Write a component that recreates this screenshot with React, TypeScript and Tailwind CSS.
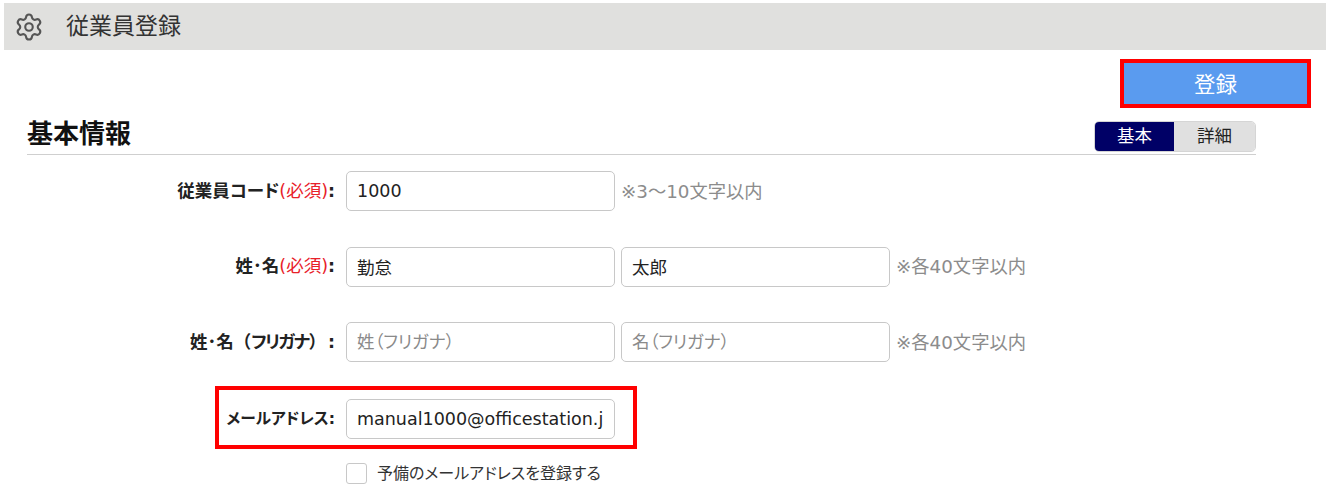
import { Settings } from "lucide-react";

const font = "font-['DejaVu_Sans','Noto_Sans_CJK_JP',sans-serif] [font-feature-settings:'palt']";
const inputClass =
  "h-[40px] w-[269px] rounded-[5px] border border-[#c8c8c8] bg-white px-[10px] text-[17.5px] text-[#222] outline-none placeholder:text-[#8a8a8a]";
const fullWidth = "[font-feature-settings:normal]";

function Required() {
  return <span className="font-normal text-[#e8212a]">(必須)</span>;
}

function Row({ label, children, hint }: { label: React.ReactNode; children: React.ReactNode; hint?: string }) {
  return (
    <div className="flex items-center">
      <div className="w-[308px] text-right text-[17.5px] font-bold whitespace-nowrap text-[#222]">{label}</div>
      <div className="ml-[11px] flex gap-[6px]">{children}</div>
      {hint && <span className={`ml-[6px] pt-[1px] text-[18.3px] text-[#8c8c8c] ${fullWidth}`}>{hint}</span>}
    </div>
  );
}

export default function App() {
  return (
    <div className={`h-[503px] overflow-hidden bg-white pl-[4px] pt-[3px] ${font}`}>
      {/* Title bar */}
      <div className="flex h-[47px] items-center bg-[#e0e0de] pl-[10px]">
        <Settings size={30} strokeWidth={1.7} className="text-[#555]" />
        <h1 className="ml-[22px] text-[23px] text-[#333]">従業員登録</h1>
      </div>

      <div className="flex justify-end pr-[15px] pt-[9px]">
        <button className="h-[49px] w-[191px] border-4 border-[#f00] bg-[#5a9bef] pt-[3px] text-[21.5px] text-white">登録</button>
      </div>

      <div className="ml-[23px] w-[1229px]">
        {/* Section heading */}
        <div className="flex h-[47px] items-end justify-between border-b border-[#cfcfcf] pb-[2px]">
          <h2 className="text-[26px] leading-[36px] font-bold text-[#111]">基本情報</h2>
          <div className="flex h-[31px] w-[162px] overflow-hidden rounded-[5px] border border-[#d5d5d5] text-[17.5px]">
            <div className="flex w-[79px] items-center justify-center bg-[#000066] text-white">基本</div>
            <div className="flex flex-1 items-center justify-center bg-[#e0e0e0] text-[#222]">詳細</div>
          </div>
        </div>

        <div className="mt-[16px] flex flex-col gap-[35.5px]">
          <Row label={<>従業員コード<Required />:</>} hint="※3～10文字以内">
            <input readOnly className={inputClass} defaultValue="1000" />
          </Row>
          <Row label={<>姓･名<Required />:</>} hint="※各40文字以内">
            <input readOnly className={inputClass} defaultValue="勤怠" />
            <input readOnly className={inputClass} defaultValue="太郎" />
          </Row>
          <Row
            label={
              <>
                姓･名<span className={fullWidth}>（</span>
                <span className="tracking-[-1.5px]">フリガナ</span>
                <span className={fullWidth}>）</span>
                <span className="ml-[2px]">:</span>
              </>
            }
            hint="※各40文字以内"
          >
            <input readOnly className={inputClass} placeholder="姓（フリガナ）" />
            <input readOnly className={inputClass} placeholder="名（フリガナ）" />
          </Row>
        </div>

        {/* Email row, highlighted */}
        <div className="ml-[188px] mt-[24px] flex h-[63px] w-[422px] items-center border-4 border-[#f00] pt-[2px]">
          <div className="w-[116px] text-right text-[15.7px] font-bold whitespace-nowrap text-[#222]">メールアドレス:</div>
          <input readOnly className={`ml-[11px] ${inputClass}`} defaultValue="manual1000@officestation.jp" />
        </div>

        <label className="ml-[319px] mt-[14px] flex items-center">
          <span className="h-[21px] w-[21px] rounded-[3px] border border-[#c8c8c8] bg-white" />
          <span className="ml-[10px] text-[16px] leading-[20px] text-[#333]">予備のメールアドレスを登録する</span>
        </label>
      </div>
    </div>
  );
}
